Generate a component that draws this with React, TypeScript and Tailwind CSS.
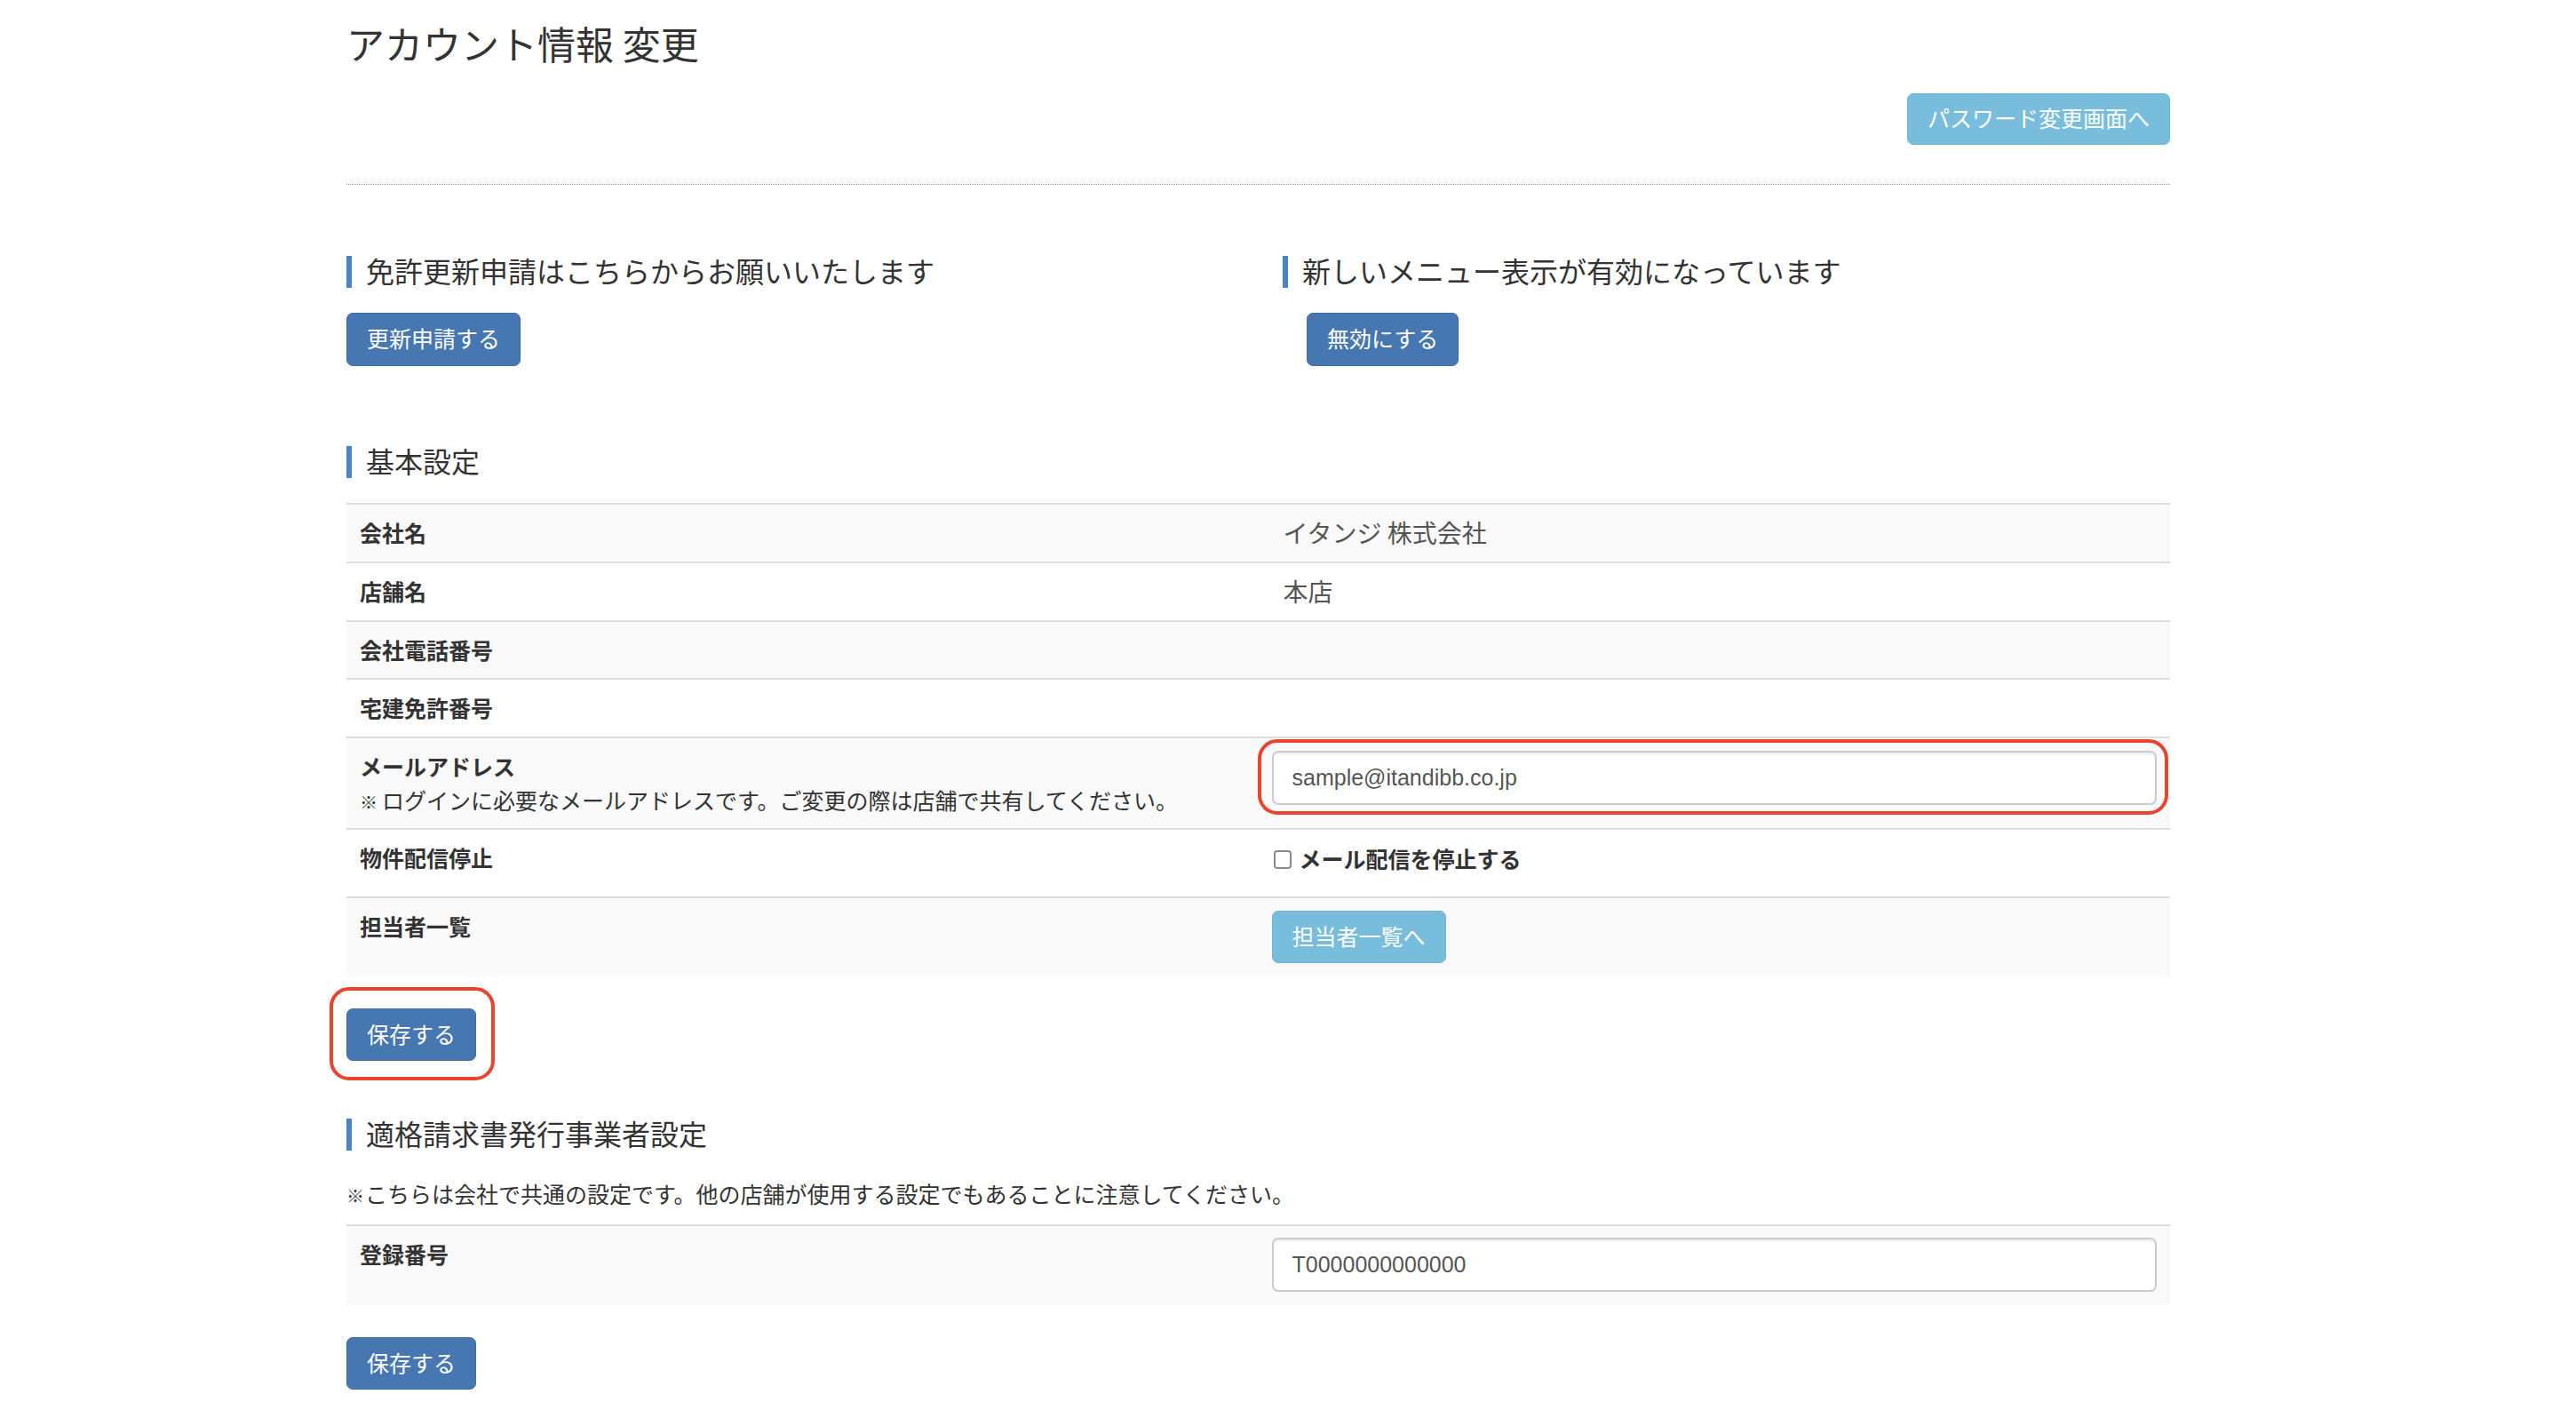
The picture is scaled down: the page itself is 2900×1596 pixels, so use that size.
import type { ReactNode } from "react";

function SectionTitle({ children }: { children: ReactNode }) {
  return (
    <h4 className="border-l-[6px] border-[#4b84c4] pb-[3px] pl-[16px] text-[32px] font-normal leading-[33px] text-[#333]">
      {children}
    </h4>
  );
}

function PrimaryButton({ children, tall }: { children: ReactNode; tall?: boolean }) {
  return (
    <button
      type="button"
      className={
        tall
          ? "inline-flex h-[60px] items-center rounded-[7px] border border-[#3f6fa7] bg-[#4677b1] px-[22px] pb-[3px] text-[25px] leading-none text-white"
          : "inline-flex h-[59px] items-center rounded-[7px] border border-[#3f6fa7] bg-[#4677b1] px-[22px] pb-[3px] text-[25px] leading-none text-white"
      }
    >
      {children}
    </button>
  );
}

function InfoButton({ children }: { children: ReactNode }) {
  return (
    <button
      type="button"
      className="inline-flex h-[59px] items-center rounded-[7px] border border-[#6db5d7] bg-[#79bddc] px-[22px] pb-[3px] text-[25px] leading-none text-white"
    >
      {children}
    </button>
  );
}

function Label({ children }: { children: ReactNode }) {
  return <div className="px-[15px] pt-[13px] text-[25px] font-bold leading-[36px] text-[#333]">{children}</div>;
}

function StaticValue({ children }: { children?: ReactNode }) {
  return (
    <div className="px-[15px] pt-[13px]">
      <div className="pl-[13px] text-[28px] leading-[36px] text-[#555]">{children}</div>
    </div>
  );
}

function TextInput({ value }: { value: string }) {
  return (
    <input
      readOnly
      value={value}
      className="h-[61px] w-full rounded-[7px] border-2 border-[#cccccc] bg-white pl-[21px] font-['Liberation_Sans',sans-serif] text-[25px] text-[#555] shadow-[inset_0_2px_2px_rgba(0,0,0,0.075)] outline-none"
    />
  );
}

export default function App() {
  return (
    <div className="min-h-[1596px] bg-white font-['Noto_Sans_CJK_JP',sans-serif] text-[#333]">
      <div className="ml-[390px] flex w-[2053px] flex-col pb-[33px]">
        <h1 className="mt-[25px] text-[43px] font-normal leading-[46px] text-[#333]">アカウント情報 変更</h1>

        <button
          type="button"
          className="mt-[34px] inline-flex h-[58px] items-center self-end rounded-[7px] border border-[#6db5d7] bg-[#79bddc] px-[22px] pb-[3px] text-[25px] leading-none text-white"
        >
          パスワード変更画面へ
        </button>

        <hr className="mt-[44px] border-dotted border-[#9a9a9a]" />

        <div className="mt-[80px] grid grid-cols-2 gap-x-[55px]">
          <div>
            <SectionTitle>免許更新申請はこちらからお願いいたします</SectionTitle>
            <div className="mt-[28px]">
              <PrimaryButton tall>更新申請する</PrimaryButton>
            </div>
          </div>
          <div>
            <SectionTitle>新しいメニュー表示が有効になっています</SectionTitle>
            <div className="mt-[28px] pl-[27px]">
              <PrimaryButton tall>無効にする</PrimaryButton>
            </div>
          </div>
        </div>

        <div className="mt-[90px]">
          <SectionTitle>基本設定</SectionTitle>
        </div>

        {/* 基本設定 table */}
        <div className="mt-[28px] flex flex-col">
          <div className="grid h-[66px] grid-cols-2 border-t-2 border-[#dddddd] bg-[#f9f9f9]">
            <Label>会社名</Label>
            <StaticValue>イタンジ 株式会社</StaticValue>
          </div>
          <div className="grid h-[66px] grid-cols-2 border-t-2 border-[#dddddd] bg-white">
            <Label>店舗名</Label>
            <StaticValue>本店</StaticValue>
          </div>
          <div className="grid h-[65px] grid-cols-2 border-t-2 border-[#dddddd] bg-[#f9f9f9]">
            <Label>会社電話番号</Label>
            <StaticValue />
          </div>
          <div className="grid h-[66px] grid-cols-2 border-t-2 border-[#dddddd] bg-white">
            <Label>宅建免許番号</Label>
            <StaticValue />
          </div>
          <div className="grid h-[103px] grid-cols-2 border-t-2 border-[#dddddd] bg-[#f9f9f9]">
            <div className="px-[15px] pt-[13px] text-[25px] leading-[36px] text-[#333]">
              <div className="font-bold">メールアドレス</div>
              <div className="mt-[2px]">
                <span className="inline-block w-[25px] text-[20px] leading-none">※</span>
                ログインに必要なメールアドレスです。ご変更の際は店舗で共有してください。
              </div>
            </div>
            <div className="px-[15px] pt-[14px]">
              <div className="relative">
                <TextInput value="sample@itandibb.co.jp" />
                <div className="pointer-events-none absolute bottom-[-11px] left-[-16px] right-[-13px] top-[-13px] rounded-[22px] border-[4px] border-[#e8452c]" />
              </div>
            </div>
          </div>
          <div className="grid h-[77px] grid-cols-2 border-t-2 border-[#dddddd] bg-white">
            <Label>物件配信停止</Label>
            <div className="px-[15px] pt-[15px]">
              <label className="flex h-[36px] items-center text-[25px] font-bold text-[#333]">
                <span className="ml-[2px] h-[21px] w-[20px] rounded-[4px] border-2 border-[#8a8a8a] bg-white" />
                <span className="ml-[9px]">メール配信を停止する</span>
              </label>
            </div>
          </div>
          <div className="grid h-[90px] grid-cols-2 border-t-2 border-[#dddddd] bg-[#f9f9f9]">
            <Label>担当者一覧</Label>
            <div className="px-[15px] pt-[14px]">
              <InfoButton>担当者一覧へ</InfoButton>
            </div>
          </div>
        </div>

        <div className="relative mt-[36px] self-start">
          <PrimaryButton>保存する</PrimaryButton>
          <div className="pointer-events-none absolute bottom-[-22px] left-[-19px] right-[-21px] top-[-24px] rounded-[22px] border-[4px] border-[#e8452c]" />
        </div>

        <div className="mt-[65px]">
          <SectionTitle>適格請求書発行事業者設定</SectionTitle>
        </div>

        <p className="mt-[30px] text-[25px] leading-[36px] text-[#333]">
          <span className="inline-block w-[21px] text-[20px] leading-none">※</span>
          こちらは会社で共通の設定です。他の店舗が使用する設定でもあることに注意してください。
        </p>

        <div className="mt-[17px] grid h-[91px] grid-cols-2 border-t-2 border-[#dddddd] bg-[#f9f9f9]">
          <Label>登録番号</Label>
          <div className="px-[15px] pt-[13px]">
            <TextInput value="T0000000000000" />
          </div>
        </div>

        <div className="mt-[36px] self-start">
          <PrimaryButton>保存する</PrimaryButton>
        </div>
      </div>
    </div>
  );
}
